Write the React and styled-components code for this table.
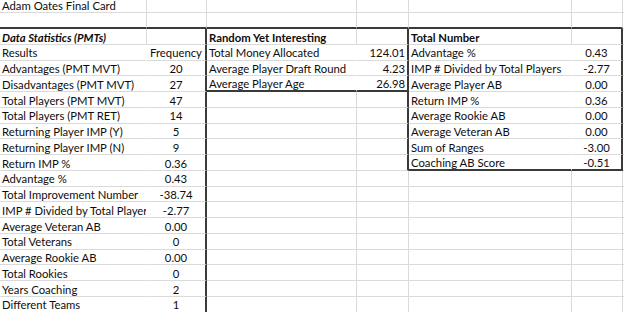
import React from "react";
import styled, { createGlobalStyle, css } from "styled-components";

const Global = createGlobalStyle`
  html, body { margin: 0; padding: 0; background: #ffffff; overflow: hidden; }
  body { width: 624px; height: 312px; }
`;

const COLS = [147, 60, 150, 52, 163, 51];

const Sheet = styled.div`
  display: grid;
  grid-template-columns: ${COLS.map((w) => `${w}px`).join(" ")} 1fr;
  grid-auto-rows: 15.75px;
  margin-top: -2.45px;
  width: 624px;
  font-family: "Lato", "Liberation Sans", sans-serif;
  font-size: 11.3px;
  color: #0d0d0d;
`;

const LIGHT = "#dadada";
const DARK = "#3a3a3a";

const edge = (kind) =>
  kind === "dark" ? `2px solid ${DARK}` : kind === "light" ? `1px solid ${LIGHT}` : `1px solid #ffffff`;

const Cell = styled.div`
  box-sizing: border-box;
  display: flex;
  align-items: center;
  justify-content: ${(p) => (p.$align === "right" ? "flex-end" : p.$align === "center" ? "center" : "flex-start")};
  padding: 1.5px 2px 0 2px;
  white-space: nowrap;
  overflow: hidden;
  line-height: 13px;
  border-right: ${(p) => edge(p.$right)};
  border-bottom: ${(p) => edge(p.$bottom)};
  ${(p) => p.$bold && css`font-weight: 700;`}
  ${(p) => p.$italic && css`font-style: italic;`}
`;

const BOXES = [
  { c0: 0, c1: 1, r0: 3, r1: 99 },
  { c0: 2, c1: 3, r0: 3, r1: 6 },
  { c0: 4, c1: 5, r0: 3, r1: 11 },
];

const rows = [
  ["Adam Oates Final Card"],
  [],
  [{ t: "Data Statistics (PMTs)", b: true, i: true }, "", { t: "Random Yet Interesting", b: true }, "", { t: "Total Number", b: true }, ""],
  ["Results", "Frequency", "Total Money Allocated", "124.01", "Advantage %", "0.43"],
  ["Advantages (PMT MVT)", "20", "Average Player Draft Round", "4.23", "IMP # Divided by Total Players", "-2.77"],
  ["Disadvantages (PMT MVT)", "27", "Average Player Age", "26.98", "Average Player AB", "0.00"],
  ["Total Players (PMT MVT)", "47", "", "", "Return IMP %", "0.36"],
  ["Total Players (PMT RET)", "14", "", "", "Average Rookie AB", "0.00"],
  ["Returning Player IMP (Y)", "5", "", "", "Average Veteran AB", "0.00"],
  ["Returning Player IMP (N)", "9", "", "", "Sum of Ranges", "-3.00"],
  ["Return IMP %", "0.36", "", "", "Coaching AB Score", "-0.51"],
  ["Advantage %", "0.43"],
  ["Total Improvement Number", "-38.74"],
  ["IMP # Divided by Total Players", "-2.77"],
  ["Average Veteran AB", "0.00"],
  ["Total Veterans", "0"],
  ["Average Rookie AB", "0.00"],
  ["Total Rookies", "0"],
  ["Years Coaching", "2"],
  ["Different Teams", "1"],
];

const ALIGN = ["left", "center", "left", "right", "left", "center", "left"];

function rightEdge(r, c) {
  for (const b of BOXES) {
    if (r >= b.r0 && r <= b.r1) {
      if (c === b.c1 || c + 1 === b.c0) return "dark";
    }
  }
  for (const b of BOXES) {
    if (r > b.r0 && r <= b.r1 && c === b.c0) return "none";
  }
  return "light";
}

function bottomEdge(r, c) {
  for (const b of BOXES) {
    if (c >= b.c0 && c <= b.c1 && (r === b.r0 - 1 || r === b.r1)) return "dark";
  }
  return "light";
}

export default function App() {
  const cells = [];
  rows.forEach((row, ri) => {
    const r = ri + 1;
    for (let c = 0; c < 7; c++) {
      const v = row[c];
      const item = typeof v === "object" && v ? v : { t: v || "" };
      cells.push(
        <Cell
          key={`${r}-${c}`}
          $align={ALIGN[c]}
          $bold={item.b}
          $italic={item.i}
          $right={rightEdge(r, c)}
          $bottom={bottomEdge(r, c)}
        >
          {item.t}
        </Cell>
      );
    }
  });
  return (
    <>
      <Global />
      <Sheet>{cells}</Sheet>
    </>
  );
}
